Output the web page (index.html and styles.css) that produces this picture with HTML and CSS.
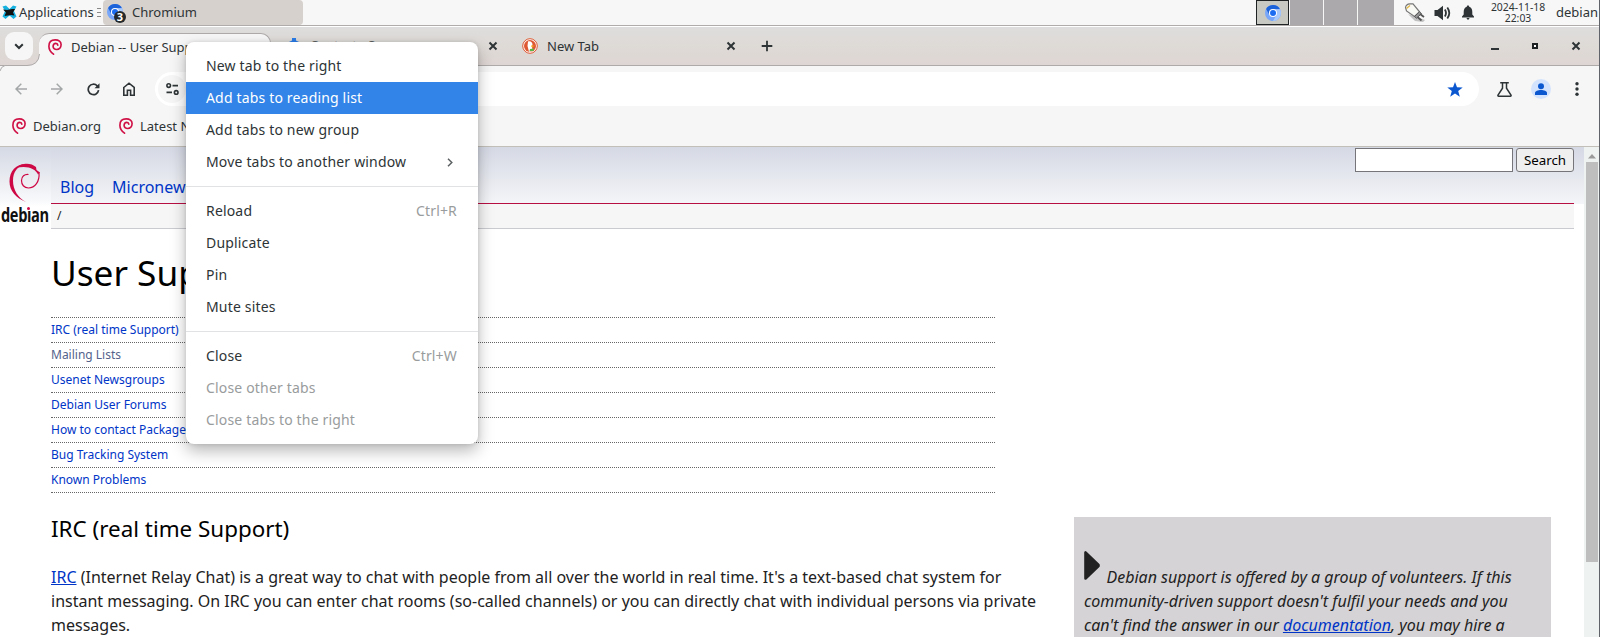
FILE: index.html
```html
<!DOCTYPE html>
<html lang="en">
<head>
<meta charset="utf-8">
<title>Debian -- User Support</title>
<link rel="stylesheet" href="styles.css">
</head>
<body>
<svg class="defs" width="0" height="0">
  <symbol id="swirl" viewBox="0 0 14 16">
    <path d="M5.500 15.200C2.500 13 .9 10.400.9 7.200.9 3.300 3.400.9 7.200.9c3.500 0 5.900 1.900 5.900 4.700 0 2.900-1.900 4.900-4.400 4.900-2.200 0-3.600-1.300-3.600-3.200 0-1.800 1.100-2.900 2.700-2.900 1.200 0 1.900.8 2 1.800" fill="none" stroke="#cf1146" stroke-width="1.650" stroke-linecap="round"/>
  </symbol>
  <symbol id="chromium" viewBox="0 0 16 16">
    <circle cx="8" cy="8" r="8" fill="#78a6f8"/>
    <path d="M1.100 4A8 8 0 0 1 15 4.200H8A4 4 0 0 0 4.400 9.800Z" fill="#1c62d8"/>
    <path d="M15 4.200A8 8 0 0 1 8 16l3.500-6A4 4 0 0 0 8 4.200Z" fill="#a9c9fb"/>
    <circle cx="8" cy="8" r="4" fill="#fff"/>
    <circle cx="8" cy="8" r="3" fill="#1b6cf0"/>
  </symbol>
  <symbol id="cross" viewBox="0 0 10 10"><path d="M1.500 1.500l7 7M8.500 1.500l-7 7" stroke="#2e3436" stroke-width="2" fill="none"/></symbol>
</svg>

<div class="panel">
  <svg class="xfce" width="15" height="15" viewBox="0 0 15 15"><path d="M.5 1.500L4 .5l3.500 3.500L11 .5l3.500 1L12 6l2.500 5.500-3 2.500-4-3.500-4 3.500L.5 11.500 3 6z" fill="#17b1e0"/><path d="M1 4.500l4 .5 2.500-.5L10 4l3 0-2 3.500 1.500 3L9 10l-3 .5-3.500.5L4 7.500z" fill="#111"/></svg>
  <span class="apps">Applications</span>
  <span class="grip"></span>
  <div class="task">
    <svg width="20" height="20" viewBox="0 0 20 20"><use href="#chromium" x="0" y="0" width="16" height="16"/><circle cx="13" cy="13" r="6" fill="#24292b"/><text x="13" y="17" class="count">3</text></svg>
    <span>Chromium</span>
  </div>
  <div class="pager">
    <div class="desk on"><svg width="16" height="16"><use href="#chromium"/></svg></div>
    <div class="desk"></div><div class="desk"></div><div class="desk last"></div>
  </div>
  <div class="tray">
    <svg class="plug" width="22" height="20" viewBox="0 0 22 20"><path d="M4 11l7 7 8 1 2-2z" fill="#aaa" opacity=".7"/><path d="M1.500 4.500Q2 1 6 .8h3l6.500 8-5 4.700L2.500 8z" fill="#f8f8f4" stroke="#777" stroke-width="1.200"/><path d="M2.500 5.500L6 2.500" stroke="#dfb640" stroke-width="1.200"/><path d="M10.500 13.500l5-4.700 2 1.800-5 4.600z" fill="#999" stroke="#555"/><path d="M16 11l4 3M13.500 14l4 3.500" stroke="#555" stroke-width="1.800"/></svg>
    <svg class="vol" width="17" height="16" viewBox="0 0 17 16"><path d="M.5 5h3L9 .8v14.400L3.500 11h-3z" fill="#2e3436"/><path d="M10.800 4.500q2.400 3.500 0 7M13.300 2.500q4 5.500 0 11" stroke="#2e3436" stroke-width="1.800" fill="none"/></svg>
    <svg class="bell" width="12" height="15" viewBox="0 0 12 15"><path d="M6 .5c.8 0 1.200.5 1.200 1.200C9.500 2.500 10.300 4.300 10.300 7v2.500L12 11.500V12.500H0V11.500L1.700 9.500V7c0-2.700.8-4.500 3.100-5.300C4.800 1 5.200.5 6 .5zM4.500 13h3q-.3 1.700-1.500 1.700T4.500 13z" fill="#2e3436"/></svg>
  </div>
  <div class="clock"><span>2024-11-18</span><span>22:03</span></div>
  <span class="user">debian</span>
</div>

<div class="tabs">
  <div class="tabsearch"><svg width="10" height="7" viewBox="0 0 10 7"><path d="M1.200 1.200L5 5l3.800-3.800" fill="none" stroke="#2e3436" stroke-width="2"/></svg></div>
  <div class="tab active">
    <svg class="flare" width="40" height="40" viewBox="0 0 40 40"><path d="M0 40V38Q1 33.500 5 32.500H27Q38.500 32.500 39.500 21H40V40z" fill="#f6f6f6"/><path d="M0 38Q1 33.500 5 32.500H27Q38.500 32.500 39.500 21" fill="none" stroke="#aeaaaa"/></svg>
    <svg width="14" height="16"><use href="#swirl"/></svg><span>Debian -- User Supp</span>
  </div>
  <div class="tab second">
    <svg width="14" height="16" viewBox="0 0 14 16"><path d="M5 2.500V0h4v2.500l4 2V12l-6 4-6-4V4.500z" fill="#2b7de9"/></svg><span>Contact - S</span>
    <svg class="x" width="10" height="10"><use href="#cross"/></svg>
  </div>
  <div class="tab third">
    <svg width="16" height="16" viewBox="0 0 16 16"><circle cx="8" cy="8" r="7.300" fill="#fff" stroke="#de5833" stroke-width="1"/><circle cx="8" cy="8" r="6" fill="#de5833"/><path d="M6 3.500c2.500-.8 4.500.7 4.500 3.200L10 8l.5 5.300-3.500.5L5.500 8z" fill="#fff"/><path d="M9 7.500l4 .3-3.500 1.400z" fill="#fbb51c"/><path d="M8 11l4-.5-.5 2.500H7.500z" fill="#54b948"/></svg><span>New Tab</span>
    <svg class="x" width="10" height="10"><use href="#cross"/></svg>
  </div>
  <svg class="plus" width="12" height="12" viewBox="0 0 12 12"><path d="M6 .7v10.600M.7 6h10.600" stroke="#2e3436" stroke-width="1.800"/></svg>
  <div class="wm">
    <svg width="8" height="10" viewBox="0 0 8 10"><path d="M0 8h8" stroke="#2e3436" stroke-width="2"/></svg>
    <svg width="6" height="8" viewBox="0 0 6 8"><rect x="1" y="2" width="4" height="4" fill="#fff" stroke="#1d2122" stroke-width="2"/></svg>
    <svg width="10" height="10"><use href="#cross"/></svg>
  </div>
</div>

<div class="toolbar">
  <svg class="back" width="12" height="12" viewBox="0 0 12 12"><path d="M12 6H1M6.300.7L1 6l5.300 5.300" fill="none" stroke="#a4a7a8" stroke-width="1.500"/></svg>
  <svg class="fwd" width="12" height="12" viewBox="0 0 12 12"><path d="M0 6h11M5.700.7L11 6l-5.300 5.300" fill="none" stroke="#a4a7a8" stroke-width="1.500"/></svg>
  <svg class="reload" width="13" height="13" viewBox="0 0 13 13"><path d="M11.600 7.200A5.200 5.200 0 1 1 10.200 2.800L11.500 4" fill="none" stroke="#2e3436" stroke-width="1.700"/><path d="M12.500.3v5h-5z" fill="#2e3436"/></svg>
  <svg class="home" width="12" height="14" viewBox="0 0 12 14"><path d="M.8 5.500L6 1.200l5.200 4.300v7.700H7.600V8.300H4.400v4.900H.8z" fill="none" stroke="#2e3436" stroke-width="1.600"/></svg>
  <div class="omnibox">
    <div class="site"><svg width="13" height="12" viewBox="0 0 13 12"><g fill="none" stroke="#2e3436" stroke-width="1.600"><circle cx="2.700" cy="2.600" r="1.800"/><path d="M6.500 2.600H12M.5 9.400H6"/><circle cx="10.200" cy="9.400" r="1.800"/></g></svg></div>
    <svg width="16" height="15" viewBox="0 0 16 15"><path d="M8 0l2 5.300 5.700.2-4.500 3.600 1.600 5.600L8 11.500l-4.800 3.200 1.600-5.600L.3 5.500 6 5.300z" fill="#0b57d0"/></svg>
  </div>
  <svg class="flask" width="15" height="15" viewBox="0 0 15 15"><path d="M3.200.8h8.600M5.500 1v5.200L1 13.200c-.3.600 0 1 .6 1h11.800c.6 0 .9-.4.6-1L9.500 6.200V1" fill="none" stroke="#2e3436" stroke-width="1.500"/></svg>
  <svg class="person" width="20" height="20" viewBox="0 0 20 20"><circle cx="10" cy="10" r="10" fill="#d3e3fd"/><circle cx="10" cy="7.200" r="3" fill="#0b57d0"/><path d="M4 16v-2c0-2 3-3 6-3s6 1 6 3v2z" fill="#0b57d0"/></svg>
  <svg class="dots" width="4" height="14" viewBox="0 0 4 14"><g fill="#2e3436"><circle cx="2" cy="1.800" r="1.700"/><circle cx="2" cy="7" r="1.700"/><circle cx="2" cy="12.200" r="1.700"/></g></svg>
</div>

<div class="bookmarks">
  <svg width="14" height="16"><use href="#swirl"/></svg><span>Debian.org</span>
  <svg width="14" height="16"><use href="#swirl"/></svg><span>Latest N</span>
</div>

<div class="view">
  <div class="page">
    <div class="logo">
      <svg width="32" height="40" viewBox="0 0 32 40"><path d="M17 39C7 35 .5 28 .5 18.500.5 8 7 1.200 17 .8c-8.500 2-13 8-13 17 0 9 5 17 13 21.200z" fill="#ce0845"/><path d="M7 5C13-.8 22-.5 27 4l.500 3 3.500 2.500-2 2C27 6 18 1.800 7 5z" fill="#ce0845"/><path d="M30 9.500c.8 9-4 15.500-10.500 15.500-4.500 0-7-3.500-7-7.500 0-4 3-6.500 7-6" fill="none" stroke="#ce0845" stroke-width="1.200"/></svg>
      <span class="word">debıan</span>
    </div>
    <div class="head">
      <div class="nav"><a>Blog</a><a>Micronew</a></div>
      <div class="search"><div class="field"></div><div class="btn">Search</div></div>
    </div>
    <div class="crumb">/</div>
    <div class="content">
      <h1>User Sup</h1>
      <ul class="toc">
        <li>IRC (real time Support)</li>
        <li class="visited">Mailing Lists</li>
        <li>Usenet Newsgroups</li>
        <li>Debian User Forums</li>
        <li>How to contact Package</li>
        <li>Bug Tracking System</li>
        <li>Known Problems</li>
      </ul>
      <div class="cols">
        <div class="main">
          <h2>IRC (real time Support)</h2>
          <p><a>IRC</a> (Internet Relay Chat) is a great way to chat with people from all over the world in real time. It's a text-based chat system for<br>instant messaging. On IRC you can enter chat rooms (so-called channels) or you can directly chat with individual persons via private<br>messages.</p>
        </div>
        <div class="aside">
          <svg width="16" height="29" viewBox="0 0 16 29"><path d="M1.500 1.500v26L14.500 15v-1z" fill="#222" stroke="#222" stroke-width="2.600" stroke-linejoin="round"/></svg>
          <p><span class="indent"></span>Debian support is offered by a group of volunteers. If this<br>community-driven support doesn't fulfil your needs and you<br>can't find the answer in our <a>documentation</a>, you may hire a</p>
        </div>
      </div>
    </div>
  </div>
  <div class="scroll"><svg width="8" height="5" viewBox="0 0 8 5"><path d="M4 0l4 4.500H0z" fill="#9a9a9a"/></svg><div class="thumb"></div></div>
</div>

<div class="menu">
  <div class="item">New tab to the right</div>
  <div class="item sel">Add tabs to reading list</div>
  <div class="item">Add tabs to new group</div>
  <div class="item">Move tabs to another window<svg width="6" height="9" viewBox="0 0 6 9"><path d="M1 .7l3.800 3.800L1 8.300" fill="none" stroke="#5c6062" stroke-width="1.500"/></svg></div>
  <div class="sep"></div>
  <div class="item">Reload<span>Ctrl+R</span></div>
  <div class="item">Duplicate</div>
  <div class="item">Pin</div>
  <div class="item">Mute sites</div>
  <div class="sep"></div>
  <div class="item">Close<span>Ctrl+W</span></div>
  <div class="item off">Close other tabs</div>
  <div class="item off">Close tabs to the right</div>
</div>
</body>
</html>
```
FILE: styles.css
```css
* { box-sizing: border-box; }
html, body { margin: 0; height: 637px; overflow: hidden; }
body { display: flex; flex-direction: column; position: relative; background: #f6f6f6; border-right: 1px solid #60646a; font: 14px/20px "Noto Sans", sans-serif; color: #2e3436; white-space: nowrap; }
svg { display: block; flex: none; }
.defs { position: absolute; }

.panel { display: flex; align-items: center; height: 26px; flex: none; border-bottom: 1px solid #b0acac; background: #f7f7f7; font-size: 13px; line-height: 18px; }
.xfce { margin-left: 2px; }
.apps { margin-left: 2px; width: 78px; margin-top: -1px; }
.grip { width: 4px; height: 9px; border-top: 1px solid #888; border-bottom: 1px solid #888; background: linear-gradient(#888, #888) 0 3px / 4px 1px no-repeat; }
.task { display: flex; align-items: center; width: 200px; height: 25px; margin-left: 2px; padding-left: 4px; background: #d6d1cd; border-radius: 4px; }
.task svg { margin-top: 2px; }
.task span { margin: -1px 0 0 5px; }
.count { font: bold 11px "Noto Sans", sans-serif; fill: #fff; text-anchor: middle; }
.pager { display: flex; margin-left: auto; height: 25px; gap: 1px; }
.desk { width: 33px; background: #aba9ab; }
.desk.on { display: flex; justify-content: center; align-items: center; background: #c8c9c3; border: 1px solid #1f2324; }
.desk.last { width: 36px; }
.tray { display: flex; align-items: center; width: 89px; padding-left: 10px; }
.vol { margin-left: 8px; }
.bell { margin-left: 11px; }
.clock { display: flex; flex-direction: column; align-items: center; width: 70px; font-size: 10.400px; line-height: 11px; margin-right: 3px; }
.user { width: 43px; margin-top: -1px; }

.tabs { display: flex; flex: none; height: 40px; align-items: center; padding-top: 1px; border-bottom: 1px solid #aeaaaa; background: linear-gradient(#fff 1px, #dedddd 1px, #dedad6 50%, #ded6d4); }
.tabsearch { display: flex; align-items: center; justify-content: center; position: relative; z-index: 1; width: 28px; height: 28px; margin-left: 5px; border-radius: 9px; background: #f6f6f6; }
.tab { display: flex; align-items: center; height: 34px; font-size: 13px; }
.tab.active { position: relative; align-self: flex-end; width: 232px; height: 33px; margin: 0 0 -1px 6px; padding: 0 0 7px 9px; background: #f6f6f6; border: 1px solid #aeaaaa; border-left: 0; border-bottom: 0; border-radius: 10px 10px 0 0; }
.flare { position: absolute; left: -39px; top: -1px; }
.tab span { margin-left: 9px; }
.tab.second { width: 211px; margin-left: 16px; color: #5b5f60; }
.tab.second span { margin-top: -2px; }
.x { margin-left: auto; }
.tab.third { width: 214px; margin-left: 24px; }
.plus { margin-left: 25px; }
.wm { display: flex; align-items: center; gap: 33px; margin-left: auto; margin-right: 18px; }

.toolbar { display: flex; align-items: center; flex: none; height: 46px; }
.back { margin-left: 15px; }
.fwd { margin-left: 24px; }
.reload { margin-left: 24px; }
.home { margin-left: 23px; }
.omnibox { display: flex; align-items: center; justify-content: space-between; width: 1324px; height: 34px; margin-left: 20px; padding: 0 16px 0 3px; border-radius: 17px; background: #fff; }
.site { display: flex; align-items: center; width: 28px; height: 28px; padding-left: 8px; border-radius: 14px; background: #f6f6f6; }
.flask { margin-left: 18px; }
.person { margin-left: 19px; }
.dots { margin-left: 24px; }
.bookmarks { display: flex; align-items: center; flex: none; height: 35px; padding: 0 0 7px 12px; border-bottom: 1px solid #c2beb8; font-size: 13px; }
.bookmarks span { width: 86px; margin-left: 7px; }

.view { display: flex; flex: 1; min-height: 0; overflow: hidden; background: #fff; }
.page { position: relative; flex: none; width: 1584px; padding: 0 10px 0 51px; background: linear-gradient(#d5d9e4, #f4f5f8) 0 0 / 100% 57px no-repeat; color: #222; }
.logo { position: absolute; left: 0; top: 0; width: 51px; height: 83px; padding: 16px 0 0 9px; background: linear-gradient(#d5d9e4, #f8f9fb 54px, #fff 60px); }
.logo::after { content: ""; position: absolute; left: 27px; top: 60px; width: 3px; height: 3px; border-radius: 2px; background: #ce0845; }
.word { display: block; margin: 1px 0 0 -8px; font: bold 20px/22px "Open Sans", sans-serif; letter-spacing: -0.500px; color: #111; transform: scaleX(.73); transform-origin: 0 0; }
.head { display: flex; justify-content: space-between; height: 57px; border-bottom: 1px solid #b80f43; }
.nav { display: flex; gap: 18px; padding: 28px 0 0 9px; font-size: 16px; line-height: 24px; color: #0035c7; }
.search { display: flex; gap: 3px; margin-top: 1px; }
.field { width: 158px; height: 24px; border: 1px solid #76767a; background: #fff; }
.btn { width: 58px; height: 24px; border: 1px solid #76767a; border-radius: 3px; background: #efefef; font-size: 13.330px; line-height: 23px; text-align: center; color: #000; }
.crumb { height: 25px; padding-left: 6px; border-bottom: 1px solid #c9cbd0; background: #f6f6f7; font-size: 12px; line-height: 23px; }
h1 { margin: 17px 0 0; font-size: 35.200px; line-height: 53px; font-weight: 400; color: #000; }
.toc { list-style: none; width: 944px; margin: 18px 0 0; padding: 0; border-top: 1px dotted #666; font-size: 12px; color: #0035c7; }
.toc li { height: 25px; line-height: 24px; border-bottom: 1px dotted #666; }
.toc .visited { color: #54638c; }
.cols { display: flex; }
.main { flex: none; width: 1023px; }
h2 { margin: 19px 0 0; font-size: 22.400px; line-height: 34px; font-weight: 400; color: #000; }
.main p { margin: 19px 0 0; font-size: 16px; line-height: 24px; }
p a { color: #0035c7; text-decoration: underline; }
.aside { position: relative; flex: none; width: 477px; height: 200px; margin-top: 24px; padding: 48px 10px 0; background: #d5d3d6; }
.aside svg { position: absolute; left: 10px; top: 34px; }
.aside p { margin: 0; font-size: 16px; line-height: 24px; font-style: italic; }
.indent { display: inline-block; width: 22.500px; }
.scroll { width: 15px; padding: 7px 1px 0 2px; background: #eef2f0; }
.scroll svg { margin: 0 auto; }
.thumb { height: 400px; margin-top: 3px; background: #bebebe; }

.menu { position: absolute; left: 186px; top: 42px; width: 292px; padding: 8px 0; border-radius: 8px; background: #fff; box-shadow: 0 7px 16px rgba(0,0,0,.28), 0 0 4px rgba(0,0,0,.12); letter-spacing: 0.170px; }
.item { display: flex; align-items: center; justify-content: space-between; height: 32px; padding: 0 21px 0 20px; }
.item svg { margin-right: 4px; }
.item span, .off { color: #999c9d; }
.sel { background: #3284e8; color: #fff; }
.sep { height: 1px; margin: 8px 0; background: #e1e2e3; }
```
